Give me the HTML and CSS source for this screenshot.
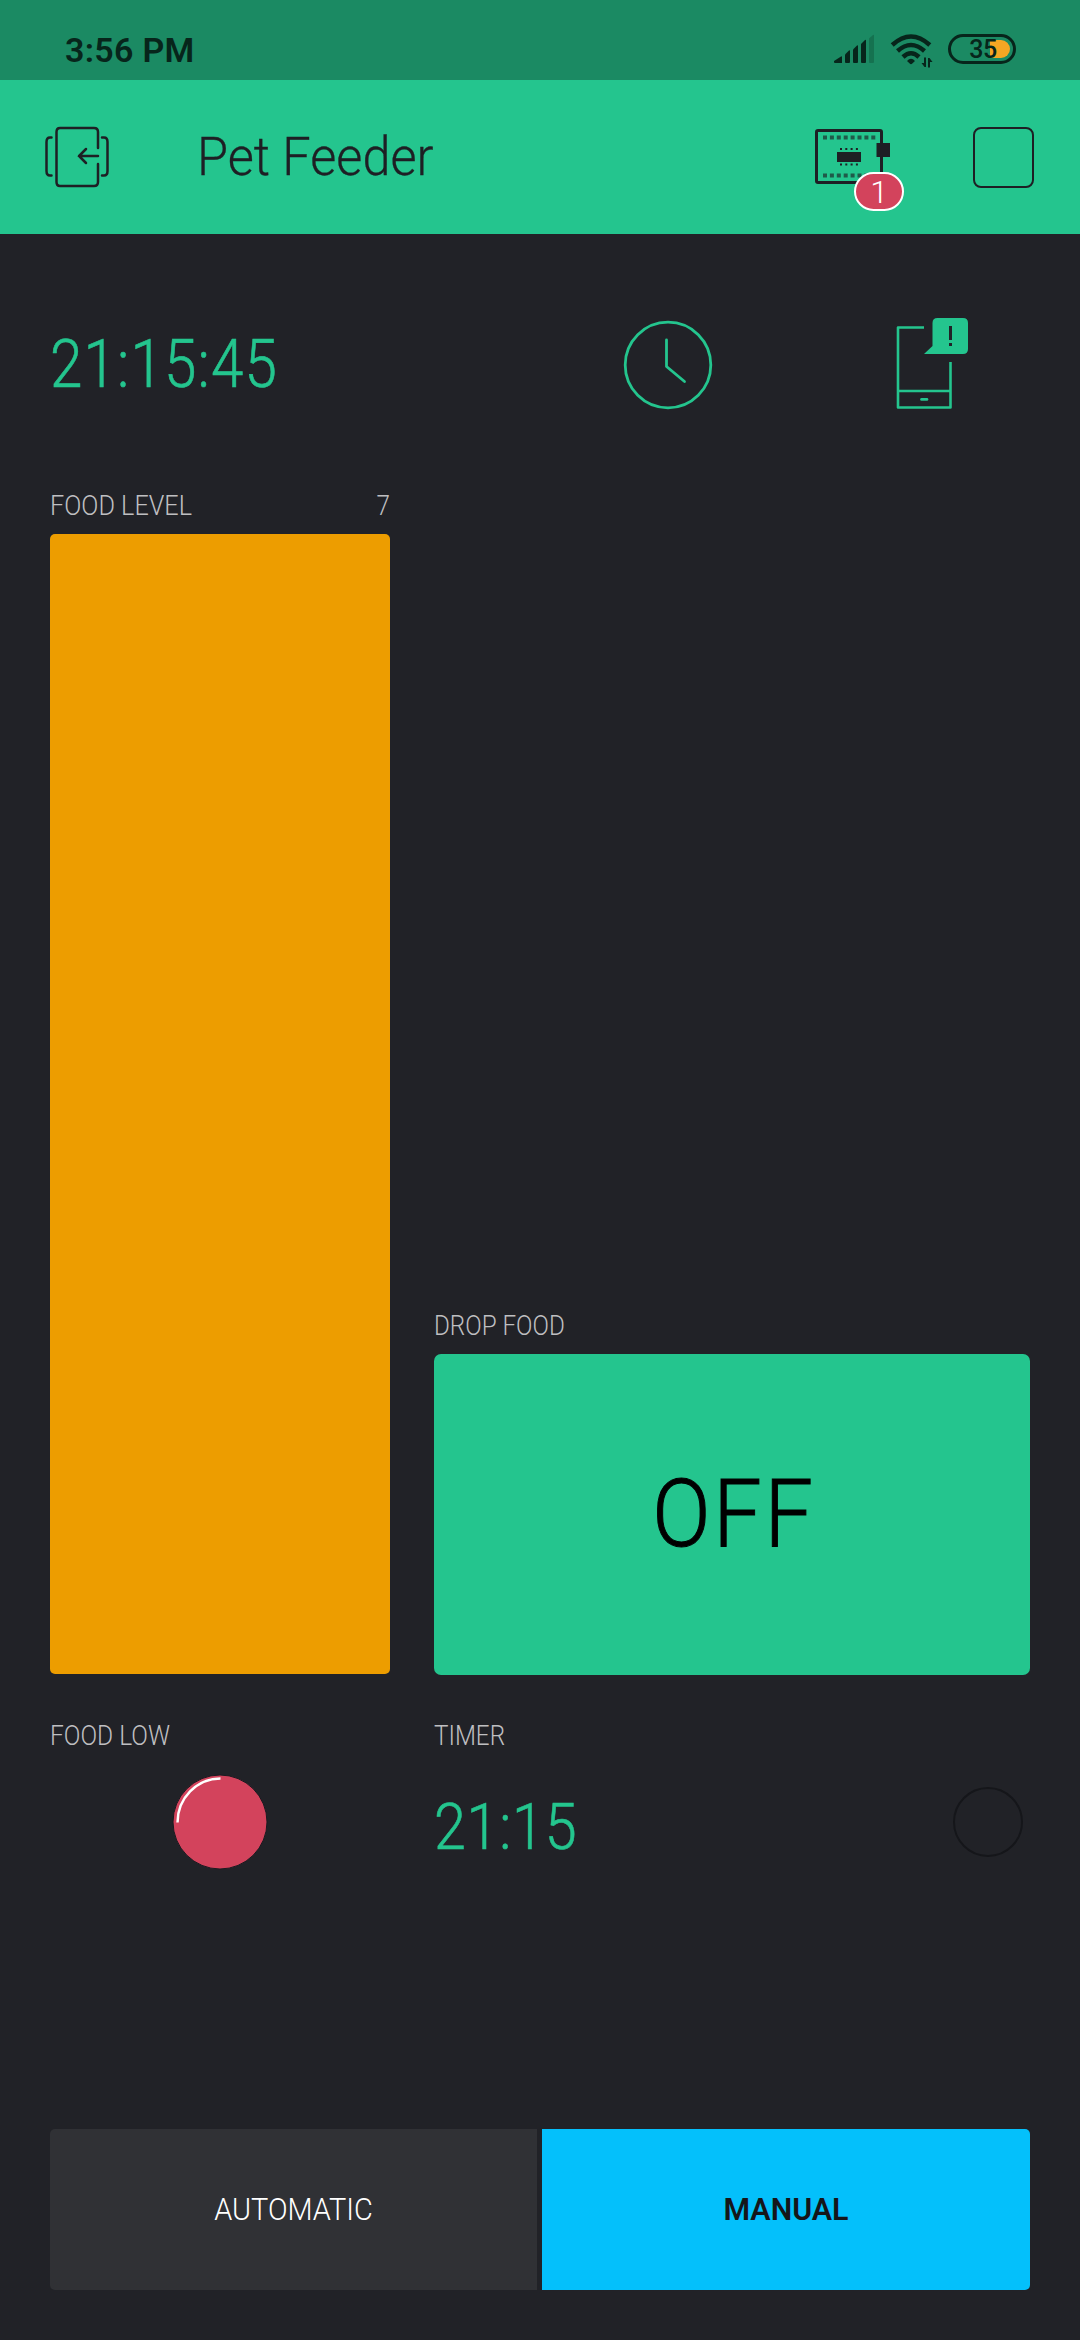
FILE: index.html
```
<!DOCTYPE html>
<html lang="en">
<head>
<meta charset="utf-8">
<title>Pet Feeder</title>
<link rel="stylesheet" href="styles.css">
</head>
<body>
<div class="status-bar">
  <span class="status-time">3:56 PM</span>
  <div class="status-icons">
    <svg class="signal" viewBox="0 0 42 32" width="42" height="32">
      <path d="M0 27 7 22.500Q8 22 8 23V29H1Q0 29 0 28Z"/>
      <path d="M11 20.500 15 16.500Q16 16 16 17V28Q16 29 15 29H12Q11 29 11 28Z"/>
      <path d="M19 15.500 23 11.500Q24 11 24 12V28Q24 29 23 29H20Q19 29 19 28Z"/>
      <path d="M27 10 31 6Q32 5.500 32 6.500V28Q32 29 31 29H28Q27 29 27 28Z"/>
      <path class="faint" d="M35 4.500 39 1Q40 .5 40 1.500V28Q40 29 39 29H36Q35 29 35 28Z"/>
    </svg>
    <svg class="wifi" viewBox="0 0 44 35" width="44" height="35">
      <g class="waves"><path d="M2.200 11Q21 -6 39.800 11"/><path d="M7.500 17Q21 5 34.500 17"/><path d="M13 23Q21 15.500 29 23"/></g>
      <path d="M17 27Q21 22.500 25 27L22.300 29.600Q21 31 19.700 29.600Z"/>
      <path d="M34 23.500H36V33H34.500L31.500 29H34ZM38 33.500V24H39.500L42.500 28H40V33.500Z"/>
    </svg>
    <div class="battery"><span class="battery-fill"></span><span class="battery-text">35</span></div>
  </div>
</div>

<header class="app-bar">
  <svg class="exit-icon" viewBox="0 0 66 64" width="66" height="64">
    <path d="M43 23V7Q43 3 39 3H5Q1.500 3 1.500 7V57Q1.500 61 5 61H39Q43 61 43 57V39" transform="translate(10 0)"/>
    <path d="M6.500 12.500H5Q1.500 12.500 1.500 17V46Q1.500 50.500 5 50.500H6.500M57 12.500H59Q62.500 12.500 62.500 17V46Q62.500 50.500 59 50.500H57"/>
    <path d="M53 31H34M41 24 34 31 41 38"/>
  </svg>
  <h1 class="title">Pet Feeder</h1>
  <div class="device">
    <svg class="board-icon" viewBox="0 0 78 58" width="78" height="58">
      <rect class="frame" x="1.500" y="2.500" width="65" height="52" rx="1.500"/>
      <path class="pins" d="M8 9.500H62M8 47.500H62"/>
      <rect x="22" y="24" width="24" height="10"/>
      <rect x="61.500" y="15" width="13.500" height="14"/>
      <path class="legs" d="M25 21H43M25 36.500H43"/>
    </svg>
    <span class="badge">1</span>
  </div>
  <span class="stop-icon"></span>
</header>

<main class="board">
  <section class="top-row">
    <span class="clock-value">21:15:45</span>
    <svg class="clock-icon" viewBox="0 0 90 90" width="90" height="90">
      <circle cx="45" cy="45" r="42.800"/><path d="M43.500 20V46.500L61.500 61.500"/>
    </svg>
    <svg class="phone-icon" viewBox="0 0 74 94" width="74" height="94">
      <path class="line" d="M28 11.500H2V91.500H54.500V46M2 75H54.500"/>
      <path class="home" d="M25.500 83.400H31"/>
      <path class="bubble" d="M41.500 2H67Q72 2 72 7V33Q72 38 67 38H28L36.500 30V7Q36.500 2 41.500 2Z"/>
      <path class="mark" d="M54.500 10V24M54.500 27V30"/>
    </svg>
  </section>

  <section class="widgets">
    <div class="level">
      <div class="label-row"><span class="label level-label">FOOD LEVEL</span><span class="label level-number">7</span></div>
      <div class="level-bar"></div>
    </div>
    <div class="drop">
      <div class="label-row"><span class="label">DROP FOOD</span></div>
      <button class="drop-button"><span class="drop-text">OFF</span></button>
    </div>
    <div class="low">
      <div class="label-row"><span class="label low-label">FOOD LOW</span></div>
      <svg class="led" viewBox="0 0 96 96" width="96" height="96">
        <circle class="led-body" cx="48" cy="48" r="47"/>
        <path class="led-shine" d="M5.500 48.500A43 44 0 0 1 48.500 4.500"/>
      </svg>
    </div>
    <div class="timer">
      <div class="label-row"><span class="label">TIMER</span></div>
      <div class="timer-row"><span class="timer-value">21:15</span><span class="timer-ring"></span></div>
    </div>
  </section>

  <nav class="segments">
    <button class="segment automatic"><span>AUTOMATIC</span></button>
    <button class="segment manual"><span>MANUAL</span></button>
  </nav>
</main>
</body>
</html>
```
FILE: styles.css
```
* { box-sizing: border-box; }

body {
  margin: 0;
  width: 1080px;
  height: 2340px;
  overflow: hidden;
  background: #212227;
  font-family: Roboto, sans-serif;
  font-weight: 300;
}

svg { display: block; flex: none; }
button { border: 0; padding: 0; font: inherit; }

.status-bar {
  height: 80px;
  padding: 0 64px 0 65px;
  display: flex;
  justify-content: space-between;
  background: #1b8a63;
  color: #07251b;
}
.status-time {
  padding-top: 30px;
  font-size: 34px;
  line-height: 40px;
  font-weight: 600;
  letter-spacing: .3px;
}
.status-icons { display: flex; padding-top: 34px; fill: #07251b; }
.signal { margin-right: 14px; }
.faint { fill: #157250; }
.wifi { margin-right: 14px; }
.waves { fill: none; stroke: #07251b; stroke-width: 4.500px; }
.battery {
  position: relative;
  width: 68px;
  height: 30px;
  border: 3px solid #07251b;
  border-radius: 15px;
  text-align: center;
}
.battery-fill {
  position: absolute;
  right: 3px;
  top: 3px;
  width: 20px;
  height: 18px;
  border-radius: 0 9px 9px 0;
  background: #f5a623;
}
.battery-text {
  position: relative;
  display: block;
  padding-left: 2px;
  font-size: 25px;
  line-height: 25px;
  font-weight: 500;
  letter-spacing: -.5px;
}

.app-bar {
  height: 154px;
  padding-left: 45px;
  display: flex;
  align-items: center;
  background: #24c58e;
  color: #1e1f24;
}
.exit-icon { fill: none; stroke: #1e1f24; stroke-width: 2.500px; stroke-linecap: round; }
.title {
  width: 618px;
  margin: -1px 0 0 86px;
  font-size: 53px;
  line-height: 60px;
  font-weight: 300;
  transform: scaleX(.952);
  transform-origin: left;
  -webkit-text-stroke: .3px;
}
.device { position: relative; width: 90px; }
.board-icon { fill: #1e1f24; }
.frame { fill: none; stroke: #1e1f24; stroke-width: 3px; }
.pins { stroke: #1f5a49; stroke-width: 4px; stroke-dasharray: 4px 2.900px; }
.legs { stroke: #1e1f24; stroke-width: 2px; stroke-dasharray: 2px 3.300px; }
.badge {
  position: absolute;
  left: 39px;
  top: 44px;
  width: 50px;
  height: 39px;
  border: 2px solid #fff;
  border-radius: 20px;
  background: #d3435c;
  color: #fff;
  font-size: 32px;
  line-height: 36px;
  text-align: center;
}
.stop-icon {
  width: 61px;
  height: 61px;
  margin-left: 68px;
  border: 2px solid #1e1f24;
  border-radius: 8px;
}

.board { padding: 0 50px; }
.top-row { height: 262px; display: flex; align-items: center; }
.clock-value, .timer-value {
  color: #24c58e;
  font-size: 66px;
  line-height: 70px;
  letter-spacing: 1.300px;
  transform: scaleX(.885);
  transform-origin: left;
  -webkit-text-stroke: .6px;
}
.clock-value { width: 573px; }
.clock-icon { fill: none; stroke: #24c58e; stroke-width: 2.800px; stroke-linecap: round; stroke-linejoin: round; }
.phone-icon { margin: -5px 0 0 183px; }
.line, .home { fill: none; stroke: #24c58e; stroke-width: 2.600px; stroke-linejoin: round; }
.home { stroke-linecap: round; }
.bubble { fill: #24c58e; }
.mark { stroke: #212227; stroke-width: 3px; }

.widgets {
  display: grid;
  grid-template-columns: 340px 596px;
  column-gap: 44px;
  row-gap: 52px;
}
.label-row {
  height: 20px;
  margin-bottom: 18px;
  display: flex;
  justify-content: space-between;
}
.label {
  color: #bfbfc1;
  font-size: 27px;
  line-height: 20px;
  transform: scaleX(.897);
  transform-origin: left;
}
.level-label { transform: scaleX(.935); }
.level-number { transform-origin: right; }
.low-label { transform: scaleX(.91); }
.level-bar { height: 1140px; border-radius: 5px; background: #ed9d00; }
.drop { display: flex; flex-direction: column; justify-content: flex-end; }
.drop-button {
  height: 321px;
  margin-bottom: -1px;
  padding: 0 0 2px 4px;
  border-radius: 7px;
  background: #24c58e;
  color: #000;
}
.drop-text {
  display: block;
  font-size: 94px;
  line-height: 110px;
  letter-spacing: 3px;
  transform: scaleX(.915);
  -webkit-text-stroke: 1px;
}
.led { margin: 28px auto 0; }
.led-body { fill: #d3435c; stroke: #191a20; stroke-width: 1px; }
.led-shine { fill: none; stroke: #fff; stroke-width: 2.500px; }
.timer-row { height: 115px; display: flex; justify-content: space-between; align-items: center; }
.timer-value { font-size: 65px; letter-spacing: .8px; padding-top: 10px; }
.timer-ring {
  width: 70px;
  height: 70px;
  margin-right: 7px;
  border: 2px solid #15161a;
  border-radius: 50%;
}

.segments {
  margin-top: 250px;
  height: 161px;
  display: grid;
  grid-template-columns: 487px 488px;
  gap: 5px;
}
.segment { padding-bottom: 2px; font-size: 32px; line-height: 40px; }
.segment span { display: block; transform: scaleX(.904); }
.automatic { border-radius: 5px 0 0 5px; background: #303135; color: #fff; }
.manual { border-radius: 0 5px 5px 0; background: #04c0fb; color: #15161a; font-weight: 600; }
.manual span { transform: scaleX(.95); }
```
